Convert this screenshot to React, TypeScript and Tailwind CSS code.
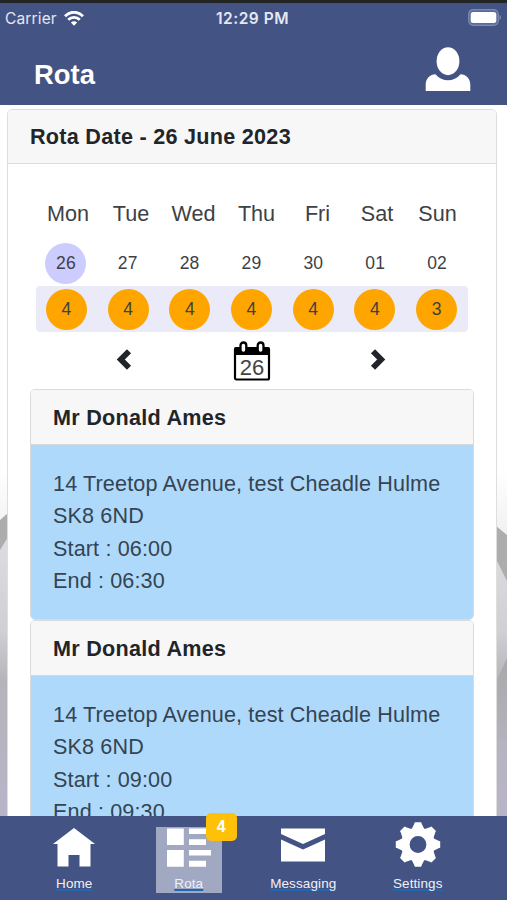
import * as React from 'react';

interface RotaDay {
  name: string;
  date: string;
  visits: number;
}

interface Visit {
  client: string;
  address: string;
  postcode: string;
  start: string;
  end: string;
}

const days: RotaDay[] = [
  { name: 'Mon', date: '26', visits: 4 },
  { name: 'Tue', date: '27', visits: 4 },
  { name: 'Wed', date: '28', visits: 4 },
  { name: 'Thu', date: '29', visits: 4 },
  { name: 'Fri', date: '30', visits: 4 },
  { name: 'Sat', date: '01', visits: 4 },
  { name: 'Sun', date: '02', visits: 3 },
];

const visits: Visit[] = [
  { client: 'Mr Donald Ames', address: '14 Treetop Avenue, test Cheadle Hulme', postcode: 'SK8 6ND', start: '06:00', end: '06:30' },
  { client: 'Mr Donald Ames', address: '14 Treetop Avenue, test Cheadle Hulme', postcode: 'SK8 6ND', start: '09:00', end: '09:30' },
];

function StatusBar() {
  return (
    <div className="grid h-[34px] shrink-0 grid-cols-3 items-center border-t-[3px] border-[#222524] pr-[7px] pl-[5px] font-['Inter',sans-serif] text-[15.500px] text-[#e4e8f3]">
      <div className="flex items-center gap-[7px]">
        <span className="tracking-[0.15px]">Carrier</span>
        <svg width="20" height="15" viewBox="0 0 20 15" fill="none" stroke="#fff" strokeWidth="2.8">
          <path d="M1 5.2C6-.1 14-.1 19 5.2" />
          <path d="M4.2 8.8c3.300-3.300 8.300-3.300 11.600 0" />
          <path d="M10 14.800 6.900 11.600c1.800-1.700 4.400-1.700 6.200 0z" fill="#fff" stroke="none" />
        </svg>
      </div>
      <span className="text-center font-semibold tracking-[0.5px] whitespace-nowrap">12:29 PM</span>
      <svg className="-mr-[2px] -mt-[3px] justify-self-end" width="34" height="17" viewBox="0 0 34 17">
        <rect x=".7" y=".7" width="29.600" height="15.600" rx="4.500" fill="#5d6b99" stroke="#7f8ab0" strokeWidth="1.200" />
        <rect x="2.700" y="2.900" width="25.600" height="11.200" rx="2.500" fill="#fff" />
        <path d="M31.500 6v5c2-.8 2-4.200 0-5z" fill="#7f8ab0" />
      </svg>
    </div>
  );
}

function UserIcon() {
  return (
    <svg width="46" height="45" viewBox="0 0 46 45" fill="#fff">
      <ellipse cx="23" cy="14.200" rx="11.400" ry="14" />
      <path d="M.7 44V37.500C.7 31.500 5 27.200 10.500 27.200c6.500 8 18.500 8 25 0 5.500 0 9.800 4.300 9.800 10.300V44z" />
    </svg>
  );
}

function WeekStrip() {
  return (
    <div className="px-7 text-[#3d4145]">
      <div className="grid grid-cols-[64px_62px_63px_63px_59px_60px_61px] text-center text-[21.600px] leading-[32px]">
        {days.map((day) => (
          <span key={day.name}>{day.name}</span>
        ))}
      </div>
      <div className="mt-[12px] -ml-px grid h-[42px] grid-cols-7 items-center justify-items-center text-[17.500px] tracking-[0.2px]">
        {days.map((day, i) => (
          <span
            key={day.date}
            className={`flex size-[41px] items-center justify-center rounded-full ${i === 0 ? 'bg-[#ccccff]' : ''}`}
          >
            {day.date}
          </span>
        ))}
      </div>
      <div className="mt-[2px] grid h-[46px] grid-cols-7 items-center justify-items-center rounded bg-[#eaeaf8] text-[17.500px]">
        {days.map((day) => (
          <span key={day.date} className="-ml-px flex size-[41px] items-center justify-center rounded-full bg-[#ffa500]">
            {day.visits}
          </span>
        ))}
      </div>
    </div>
  );
}

function WeekControls() {
  return (
    <div className="mt-[9px] flex h-10 items-center justify-between pl-[108px] pr-[110px]">
      <svg width="16" height="24" viewBox="0 0 16 24" fill="none" stroke="#212529" strokeWidth="5.8" className="-mt-[3px]">
        <path d="M13 3.200 4.800 11.500 13 19.800" />
      </svg>
      <svg width="38" height="40" viewBox="0 0 38 40" className="ml-px">
        <rect x="2" y="7" width="34" height="31.500" rx="1.500" fill="#fff" stroke="#000" strokeWidth="2.200" />
        <path d="M1.500 6.500h35v7.500h-35z" />
        <rect x="7.500" y="1.500" width="5.800" height="10.500" rx="2.900" fill="#fff" stroke="#000" strokeWidth="2.300" />
        <rect x="24.700" y="1.500" width="5.800" height="10.500" rx="2.900" fill="#fff" stroke="#000" strokeWidth="2.300" />
        <text x="19" y="34" textAnchor="middle" fontSize="22" fill="#444">
          26
        </text>
      </svg>
      <svg width="16" height="24" viewBox="0 0 16 24" fill="none" stroke="#212529" strokeWidth="5.8" className="-mt-[3px]">
        <path d="M3 3.200 11.200 11.500 3 19.800" />
      </svg>
    </div>
  );
}

function VisitCard({ visit }: { visit: Visit }) {
  return (
    <section className="overflow-hidden rounded-[5px] border border-[#d9dcdf]">
      <h2 className="flex h-[55px] items-center border-b border-[#d5d9dc] bg-[#f7f7f7] px-[22px] pt-[2px] font-bold tracking-[0.27px] text-[#212529]">
        {visit.client}
      </h2>
      <div className="h-[174px] bg-[#aed9fb] px-[22px] pt-[23px] leading-[32.400px] tracking-[0.13px] whitespace-nowrap text-[#344452]">
        <p>{visit.address}</p>
        <p>{visit.postcode}</p>
        <p>Start : {visit.start}</p>
        <p>End : {visit.end}</p>
      </div>
    </section>
  );
}

// Faded logo artwork that shows in the gutters either side of the card
function Backdrop() {
  return (
    <svg className="absolute inset-0" width="507" height="711" viewBox="0 105 507 711">
      <defs>
        <linearGradient id="gutter" x1="0" y1="0" x2="0" y2="1">
          <stop offset="0" stopColor="#e6e6ea" />
          <stop offset=".45" stopColor="#cfcfd4" />
          <stop offset=".6" stopColor="#b5b4ba" />
          <stop offset="1" stopColor="#b9b4c9" />
        </linearGradient>
        <linearGradient id="fade" x1="0" y1="0" x2="0" y2="1">
          <stop offset="0" stopColor="#fff" />
          <stop offset="1" stopColor="#f0f0f0" />
        </linearGradient>
        <linearGradient id="shade" x1="0" y1="0" x2="0" y2="1">
          <stop offset="0" stopColor="#a9a9ab" />
          <stop offset="1" stopColor="#b4b2bb" />
        </linearGradient>
      </defs>
      <path d="M0 480h8v336H0zM496 480h11v336h-11z" fill="url(#gutter)" />
      <path d="M0 470h8v46l-8 6zM496 470h11v66l-11-10z" fill="url(#fade)" />
      <path d="M0 520l8-7v24l-8 13zM496 526l11 9v46l-11-22z" fill="#adadad" />
      <path d="M507 658l-11 24v58h11z" fill="url(#shade)" />
    </svg>
  );
}

const gearTeeth = [0, 45, 90, 135, 180, 225, 270, 315];

const navItems: { label: string; icon: React.ReactNode; badge?: number }[] = [
  {
    label: 'Home',
    icon: <path d="M22 1 43 17H38.500V39.500H27.500V28H16.500V39.500H5.500V17H1z" />,
  },
  {
    label: 'Rota',
    badge: 4,
    icon: (
      <path d="M0 1.500h16.800v16.500H0zM0 23h16.800v16.800H0zM22 1.500h22v5.500H22zM22 12.200h17v5.800H22zM22 23h22v5.500H22zM22 33.700h17v6H22z" />
    ),
  },
  {
    label: 'Messaging',
    icon: <path d="M0 1.500h44v5.500L22 17 0 7zM0 12.500l22 10L44 12.500v22H0z" />,
  },
  {
    label: 'Settings',
    icon: (
      <g transform="translate(22 17.500)">
        <circle r="12.700" fill="none" stroke="#fff" strokeWidth="8.600" />
        {gearTeeth.map((angle) => (
          <path key={angle} d="M-6.800-14.500-3.800-20.500-3.200-22.200H3.200L3.800-20.500 6.800-14.500z" transform={`rotate(${angle})`} />
        ))}
      </g>
    ),
  },
];

function TabBar() {
  return (
    <nav className="grid h-[84px] shrink-0 grid-cols-4 justify-items-center bg-[#435383] pt-[11px] pr-[32px] pl-[17px]">
      {navItems.map((item) => (
        <a
          key={item.label}
          className={`relative flex h-[66px] w-[66px] flex-col items-center ${item.badge ? 'bg-[#a1a8c2]' : ''}`}
        >
          <svg width="44" height="42" viewBox="0 0 44 42" fill="#fff" className="shrink-0 overflow-visible">
            {item.icon}
          </svg>
          <span className="mt-[6px] text-[13.500px] leading-[17px] tracking-[0.1px] text-[#eef1f8] underline decoration-[#1f67b5] decoration-2 underline-offset-1 [text-decoration-skip-ink:none]">
            {item.label}
          </span>
          {item.badge ? (
            <span className="absolute -top-[14px] left-[50px] flex h-[28px] w-[31px] items-center justify-center rounded-[5px] bg-[#ffc107] text-[16px] font-bold text-white">
              {item.badge}
            </span>
          ) : null}
        </a>
      ))}
    </nav>
  );
}

export default function App() {
  return (
    <div className="flex h-[900px] w-[507px] flex-col overflow-hidden bg-white font-['Liberation_Sans',Arial,sans-serif] text-[21.600px]">
      <header className="flex h-[105px] shrink-0 flex-col bg-[#435383]">
        <StatusBar />
        <div className="flex items-start justify-between pt-[13px] pl-[34px] pr-[36px]">
          <h1 className="mt-[11px] text-[27.400px] leading-[34px] font-bold text-white">Rota</h1>
          <UserIcon />
        </div>
      </header>
      <main className="relative min-h-0 flex-1 overflow-hidden pt-[4px] pr-[10px] pl-[7px]">
        <Backdrop />
        <div className="relative h-[800px] rounded-[5px] border border-[#dedede] bg-white">
          <div className="flex h-[54px] items-center rounded-t-[4px] border-b border-[#dcdcdc] bg-[#f7f7f7] px-[22px] pt-[2px] font-bold tracking-[0.27px] text-[#212529]">
            Rota Date - 26 June 2023
          </div>
          <div className="pt-[34px]">
            <WeekStrip />
            <WeekControls />
            <div className="mt-[8px] pr-[22px] pl-[22px]">
              {visits.map((visit) => (
                <VisitCard key={visit.start} visit={visit} />
              ))}
            </div>
          </div>
        </div>
      </main>
      <TabBar />
    </div>
  );
}
